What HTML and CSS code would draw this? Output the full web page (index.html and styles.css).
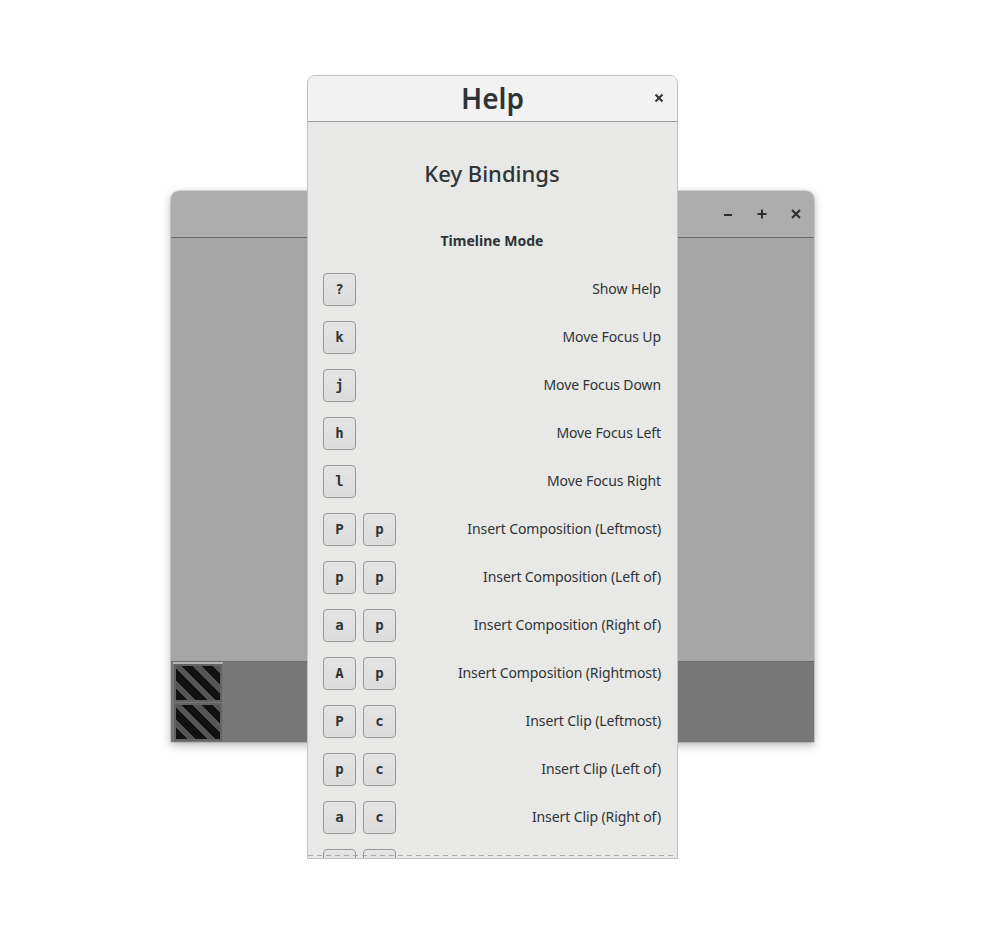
FILE: index.html
```html
<!DOCTYPE html>
<html>
<head>
  <title>Help</title>
  <link rel="stylesheet" href="styles.css">
</head>
<body>
<div class="desktop">

  <div class="app-window">
    <div class="app-titlebar">
      <span class="win-btn">
        <svg width="10" height="10" viewBox="0 0 10 10"><path d="M1 6h8" stroke="#2e2e2e" stroke-width="2"/></svg>
      </span>
      <span class="win-btn">
        <svg width="10" height="10" viewBox="0 0 10 10"><path d="M0.5 5h9M5 0.5v9" stroke="#2e2e2e" stroke-width="2"/></svg>
      </span>
      <span class="win-btn">
        <svg width="10" height="10" viewBox="0 0 10 10"><path d="M1 1l8 8M9 1l-8 8" stroke="#2e2e2e" stroke-width="2"/></svg>
      </span>
    </div>
    <div class="app-content"></div>
    <div class="timeline">
      <div class="track-heads">
        <div class="stripe-box"></div>
        <div class="stripe-box"></div>
      </div>
    </div>
  </div>

  <div class="help-dialog">
    <div class="help-header">
      <span class="help-title">Help</span>
      <span class="help-close">
        <svg width="10" height="10" viewBox="0 0 10 10"><path d="M1.5 1.5l7 7M8.5 1.5l-7 7" stroke="#2e3436" stroke-width="2"/></svg>
      </span>
    </div>
    <div class="help-body">
      <div class="help-scroll">
        <h1 class="section-title">Key Bindings</h1>
        <h2 class="mode-title">Timeline Mode</h2>

        <div class="binding">
          <div class="keys"><span class="key">?</span></div>
          <span class="action">Show Help</span>
        </div>
        <div class="binding">
          <div class="keys"><span class="key">k</span></div>
          <span class="action">Move Focus Up</span>
        </div>
        <div class="binding">
          <div class="keys"><span class="key">j</span></div>
          <span class="action">Move Focus Down</span>
        </div>
        <div class="binding">
          <div class="keys"><span class="key">h</span></div>
          <span class="action">Move Focus Left</span>
        </div>
        <div class="binding">
          <div class="keys"><span class="key">l</span></div>
          <span class="action">Move Focus Right</span>
        </div>
        <div class="binding">
          <div class="keys"><span class="key">P</span><span class="key">p</span></div>
          <span class="action">Insert Composition (Leftmost)</span>
        </div>
        <div class="binding">
          <div class="keys"><span class="key">p</span><span class="key">p</span></div>
          <span class="action">Insert Composition (Left of)</span>
        </div>
        <div class="binding">
          <div class="keys"><span class="key">a</span><span class="key">p</span></div>
          <span class="action">Insert Composition (Right of)</span>
        </div>
        <div class="binding">
          <div class="keys"><span class="key">A</span><span class="key">p</span></div>
          <span class="action">Insert Composition (Rightmost)</span>
        </div>
        <div class="binding">
          <div class="keys"><span class="key">P</span><span class="key">c</span></div>
          <span class="action">Insert Clip (Leftmost)</span>
        </div>
        <div class="binding">
          <div class="keys"><span class="key">p</span><span class="key">c</span></div>
          <span class="action">Insert Clip (Left of)</span>
        </div>
        <div class="binding">
          <div class="keys"><span class="key">a</span><span class="key">c</span></div>
          <span class="action">Insert Clip (Right of)</span>
        </div>
        <div class="binding">
          <div class="keys"><span class="key">A</span><span class="key">c</span></div>
          <span class="action">Insert Clip (Rightmost)</span>
        </div>
      </div>
      <div class="overshoot"></div>
    </div>
  </div>

</div>
</body>
</html>
```

FILE: styles.css
```css
body {
  margin: 0;
  background: #ffffff;
  font-family: "Noto Sans", "Open Sans", sans-serif;
  color: #2e3436;
}

.desktop {
  position: relative;
  width: 1006px;
  height: 950px;
}

/* background app window */
.app-window {
  position: absolute;
  left: 171px;
  top: 191px;
  width: 643px;
  height: 551px;
  display: flex;
  flex-direction: column;
  border-radius: 8px 8px 0 0;
  box-shadow: 0 0 0 1px rgba(0, 0, 0, 0.12), 0 3px 10px rgba(0, 0, 0, 0.3);
  overflow: hidden;
}

.app-titlebar {
  height: 46px;
  flex: none;
  background: #adadad;
  border-bottom: 1px solid #6c6c6c;
  display: flex;
  align-items: center;
  justify-content: flex-end;
  padding-right: 13px;
  gap: 24px;
}

.win-btn {
  width: 10px;
  height: 10px;
  display: flex;
}

.app-content {
  flex: 1;
  background: #a5a5a5;
}

.timeline {
  height: 80px;
  flex: none;
  background: #777777;
  border-top: 1px solid #6a6a6a;
}

.track-heads {
  width: 50px;
  margin-left: 2px;
  border-top: 2px solid #b4b4b4;
  display: flex;
  flex-direction: column;
  gap: 1px;
}

.stripe-box {
  height: 38px;
  box-sizing: border-box;
  border: 2px solid #636363;
  margin: 0 1px;
  background: repeating-linear-gradient(45deg, #111111 0 8px, #565656 8px 14px);
}

/* help dialog */
.help-dialog {
  position: absolute;
  left: 307px;
  top: 75px;
  width: 369px;
  height: 782px;
  border: 1px solid #c2c2c2;
  border-radius: 8px 8px 0 0;
  background: #e8e8e7;
  display: flex;
  flex-direction: column;
  overflow: hidden;
}

.help-header {
  height: 45px;
  flex: none;
  background: #f2f2f2;
  border-bottom: 1px solid #9b9b9b;
  display: flex;
  align-items: center;
  justify-content: center;
  position: relative;
}

.help-title {
  font-size: 28px;
  font-weight: 600;
  line-height: 34px;
  margin-top: -2px;
}

.help-close {
  position: absolute;
  right: 13px;
  top: 17px;
  display: flex;
}

.help-body {
  flex: 1;
  position: relative;
  overflow: hidden;
}

.help-scroll {
  padding: 36px 16px 0 15px;
}

.section-title {
  margin: 0;
  text-align: center;
  font-size: 22px;
  font-weight: 500;
  line-height: 30px;
}

.mode-title {
  margin: 43px 0 14px;
  text-align: center;
  font-size: 14px;
  font-weight: 700;
  line-height: 20px;
}

.binding {
  height: 48px;
  display: flex;
  align-items: center;
  justify-content: space-between;
}

.keys {
  display: flex;
  gap: 8px;
}

.key {
  width: 33px;
  height: 33px;
  box-sizing: border-box;
  border: 1px solid #999999;
  border-radius: 4px;
  background: linear-gradient(#e4e4e4, #dcdcdc);
  display: flex;
  align-items: center;
  justify-content: center;
  font-family: "DejaVu Sans Mono", monospace;
  font-weight: bold;
  font-size: 14px;
  color: #2e3436;
}

.keys .key + .key {
  margin-left: -1px;
}

.action {
  font-size: 14px;
  line-height: 20px;
  letter-spacing: -0.1px;
}

.overshoot {
  position: absolute;
  left: 0;
  right: 0;
  bottom: 2px;
  height: 1px;
  background: repeating-linear-gradient(90deg, #a8a8a8 0 5px, transparent 5px 9px);
}
```
